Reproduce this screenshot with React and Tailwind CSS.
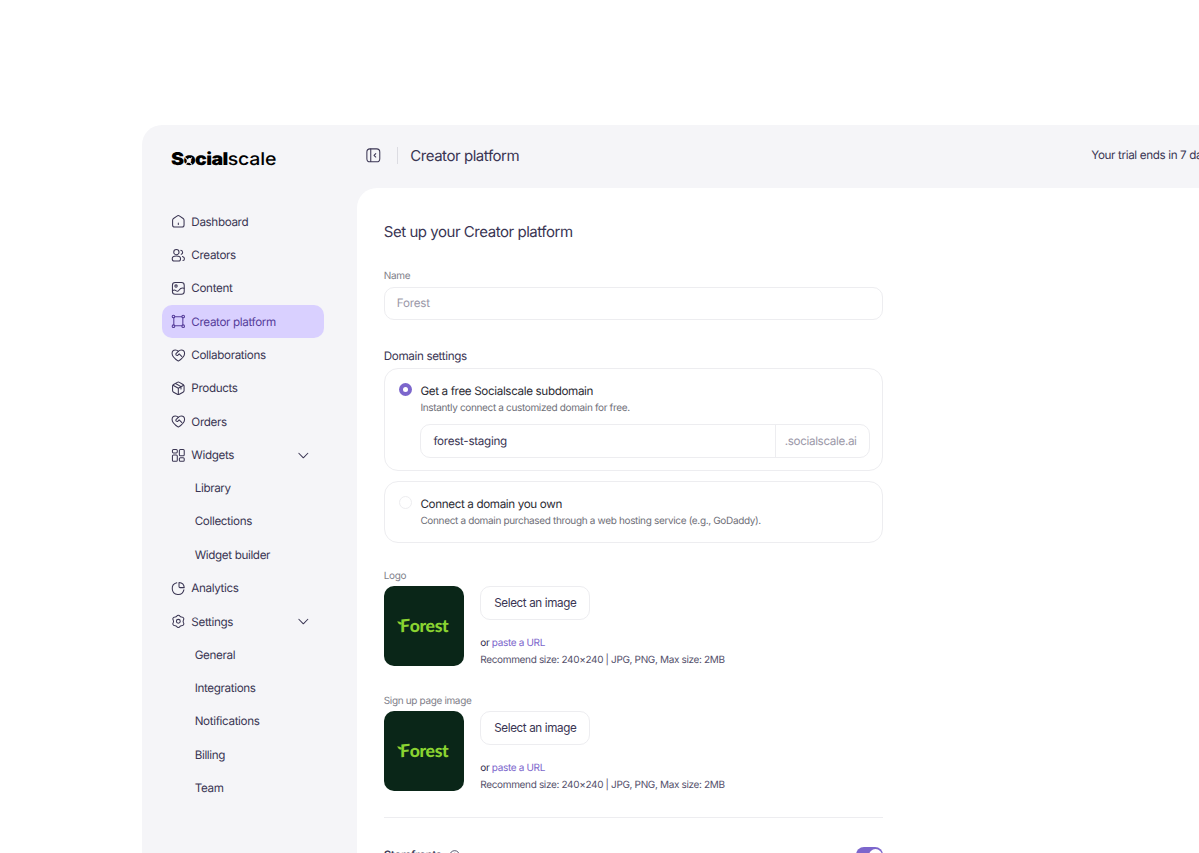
import { clsx } from 'clsx';

const icons = {
  home: <>
      <path d="M3.75 10.4c0-1 .5-1.95 1.3-2.5l5-3.5a3.4 3.4 0 0 1 3.9 0l5 3.5c.8.55 1.3 1.5 1.3 2.5v6.85a3 3 0 0 1-3 3H6.75a3 3 0 0 1-3-3z" />
      <path d="M12 14.5v2.2" />
    </>,
  users: <>
      <circle cx="9.2" cy="7.4" r="3.8" />
      <path d="M3.2 16.8c0-2.4 2.5-3.8 6-3.8s6 1.4 6 3.8c0 2.3-1.5 3.5-3 3.5h-6c-1.5 0-3-1.2-3-3.5z" />
      <path d="M15.6 4.8a3 3 0 0 1 .6 5.8M18 13.8c1.8.5 2.8 1.6 2.8 3.2 0 1.5-.8 2.5-2.1 2.5" />
    </>,
  image: <>
      <rect x="3.5" y="3.5" width="17" height="17" rx="4" />
      <circle cx="8.7" cy="8.7" r="1.7" />
      <path d="M3.7 15.5c1.7-1.5 3.3-1.3 4.8-.2 2 1.5 3.3 1.2 4.7-.8 1.7-2.5 4.1-3.4 7.1-2.5" />
    </>,
  frame: <>
      <circle cx="5" cy="5" r="1.9" />
      <circle cx="19" cy="5" r="1.9" />
      <circle cx="5" cy="19" r="1.9" />
      <circle cx="19" cy="19" r="1.9" />
      <path d="M7 5.5h10M7 18.5h10M5.5 7v10M18.5 7v10" />
    </>,
  heart: <>
      <path d="M12 20.3C7 17 3 13.5 3 9.2 3 6.3 5.2 4.2 7.8 4.2c1.7 0 3.2.8 4.2 2.1 1-1.3 2.5-2.1 4.2-2.1C18.8 4.2 21 6.3 21 9.2c0 4.3-4 7.8-9 11.1z" />
      <path d="m12 6.3-3 3c-.8.8-.7 1.9.1 2.5.8.6 1.7.5 2.4-.2l1.7-1.7 4 3.8" />
    </>,
  box: <>
      <path d="M10.5 3.4a3 3 0 0 1 3 0l5.3 3a3 3 0 0 1 1.5 2.6v6a3 3 0 0 1-1.5 2.6l-5.3 3a3 3 0 0 1-3 0l-5.3-3A3 3 0 0 1 3.7 15V9a3 3 0 0 1 1.5-2.6z" />
      <path d="m4.3 7.5 7.7 4.4 7.7-4.4M12 12v8.8M8 5l7.8 4.5v3.3" />
    </>,
  widgets: <>
      <rect x="3.5" y="3.5" width="7" height="5" rx="1.5" />
      <rect x="3.5" y="11.5" width="7" height="9" rx="1.5" />
      <rect x="13.5" y="3.5" width="7" height="9" rx="1.5" />
      <rect x="13.5" y="15.5" width="7" height="5" rx="1.5" />
    </>,
  pie: <>
      <path d="M9.8 4a8.5 8.5 0 1 0 10.2 10.2" />
      <path d="M13 3.5c4 .3 7.2 3 7.5 7.5h-6c-.9 0-1.5-.6-1.5-1.5z" />
    </>,
  gear: <>
      <path d="M9.7 4.5c.5-.9 1.3-1.3 2.3-1.3s1.8.4 2.3 1.3c.5.8 1.3 1.2 2.2 1.2 2 0 3 .9 3.3 2 .3.9.1 1.7-.4 2.3-.7 1.3-.7 2.7 0 4 .5.6.7 1.4.4 2.3-.3 1.1-1.3 2-3.3 2-.9 0-1.7.4-2.2 1.2-.5.9-1.3 1.3-2.3 1.3s-1.8-.4-2.3-1.3c-.5-.8-1.3-1.2-2.2-1.2-2 0-3-.9-3.3-2-.3-.9-.1-1.7.4-2.3.7-1.3.7-2.7 0-4-.5-.6-.7-1.4-.4-2.3.3-1.1 1.3-2 3.3-2 .9 0 1.7-.4 2.2-1.2z" />
      <circle cx="12" cy="12" r="2.8" />
    </>,
  chevron: <path d="m5.5 9 6.5 6.5L18.5 9" />,
  collapse: <>
      <rect x="2.7" y="2.7" width="18.6" height="18.6" rx="4.5" />
      <path d="M8.3 3v18M15.5 9.5 13 12l2.5 2.5" />
    </>,
  info: <>
      <circle cx="12" cy="12" r="9" />
      <path d="M12 7.5v5M12 15.5v.5" />
    </>
};

const nav = [
  { label: 'Dashboard', icon: 'home' },
  { label: 'Creators', icon: 'users' },
  { label: 'Content', icon: 'image' },
  { label: 'Creator platform', icon: 'frame', active: true },
  { label: 'Collaborations', icon: 'heart' },
  { label: 'Products', icon: 'box' },
  { label: 'Orders', icon: 'heart' },
  { label: 'Widgets', icon: 'widgets', items: ['Library', 'Collections', 'Widget builder'] },
  { label: 'Analytics', icon: 'pie' },
  { label: 'Settings', icon: 'gear', items: ['General', 'Integrations', 'Notifications', 'Billing', 'Team'] }
];

const Icon = ({ name, className = 'size-[16.67px]' }) => (
  <svg className={clsx('shrink-0', className)} viewBox="0 0 24 24" fill="none" stroke="currentColor" strokeWidth={1.5} strokeLinecap="round" strokeLinejoin="round">
    {icons[name]}
  </svg>
);

const Wordmark = () => (
  <div className="flex h-5 origin-left scale-x-111 items-center whitespace-nowrap text-[17.6px] leading-5 text-black">
    <span className="font-black tracking-[-0.03em]">
      S<span className="relative inline-block">o
        <svg className="absolute inset-x-0 bottom-1 h-[10px] w-full" viewBox="0 0 12 10" stroke="#f5f5f8" strokeWidth="1.2" fill="#f5f5f8">
          <path d="M2 1l7 8M9 1 2 9" />
          <circle cx="5.5" cy="5" r="1.5" />
        </svg>
      </span>cial
    </span>
    <span className="font-medium tracking-[-0.01em]">scale</span>
  </div>
);

const NavItem = ({ label, icon, active, items }) => (
  <li>
    <div className={clsx('flex h-[33.33px] items-center gap-[5px] rounded-[10px] pr-[12px] pl-[8.1px]', active ? 'bg-[#d9d0ff] text-[#553c9a]' : 'text-[#3a3553]')}>
      <Icon name={icon} />
      <span className="flex-1 pt-[1.3px]">{label}</span>
      {items && <Icon name="chevron" />}
    </div>
    {items && <ul>
        {items.map(item => <li key={item} className="flex h-[33.33px] items-center pt-px pl-[33.1px] text-[#3a3553]">{item}</li>)}
      </ul>}
  </li>
);

const Option = ({ title, text, checked, children }) => (
  <div className="flex gap-[8.3px] rounded-[14px] border border-[#ededf0] pt-[14px] pr-[12.5px] pb-[12px] pl-[14px]">
    <span className={clsx('flex size-[13.33px] shrink-0 items-center justify-center rounded-full', checked ? 'bg-[#7c66cc]' : 'border border-[#ededf0]')}>
      {checked && <span className="size-[5px] rounded-full bg-white" />}
    </span>
    <div className="flex-1">
      <p className="text-[11.67px] leading-[16.67px] text-[#2b2b33]">{title}</p>
      <p className="pt-[0.8px] text-[10px] leading-[16.4px] tracking-[-0.034em] text-[#6f6f78]">{text}</p>
      {children}
    </div>
  </div>
);

const ImageField = ({ label }) => (
  <div className="pt-[27.8px]">
    <p className="text-[10px] leading-[14px] tracking-[-0.035em] text-[#808089]">{label}</p>
    <div className="mt-[3.2px] flex h-20 gap-[16.5px]">
      <div className="flex size-20 items-center justify-center rounded-[10px] bg-[#0a2618]">
        <span className="relative mr-[2px] pl-[3px] font-[Lato,sans-serif] text-[17.6px] leading-5 font-black tracking-[-0.02em] text-[#8ad331]">
          <svg className="absolute top-[5px] left-0 h-[4px] w-[5px]" viewBox="0 0 6 4" fill="currentColor">
            <path d="M0 .3C2-.1 4.5.6 6 2L5 4C3.5 3.9 1.8 3.2 1.5 1.9z" />
          </svg>
          <span className="inline-block -skew-y-6">F</span>orest
        </span>
      </div>
      <div className="text-[10px] leading-[16.67px] tracking-[-0.034em] text-[#55516b]">
        <button className="block h-[33.33px] w-[110px] rounded-[10px] border border-[#ededf0] pt-px text-[11.67px] tracking-[-0.033em] text-[#3a3553]">Select an image</button>
        <p className="mt-[15.4px]"><span className="text-[#2d2847]">or</span> <a className="text-[#7c66cc]">paste a URL</a></p>
        <p>Recommend size: 240×240 | JPG, PNG, Max size: 2MB</p>
      </div>
    </div>
  </div>
);

export default function App() {
  return <div className="h-screen overflow-hidden bg-white pt-[125px] pl-[141.5px] font-['Inter',sans-serif] text-[11.67px] tracking-[-0.031em] text-[#3a3553] [text-rendering:geometricPrecision]">
      <div className="flex h-full rounded-tl-[20px] bg-[#f5f5f8]">
        <aside className="w-[215.9px] shrink-0 pr-[33.3px] pl-[20.1px]">
          <div className="pt-[24.5px] pb-[35.5px] pl-[9.6px]"><Wordmark /></div>
          <ul>
            {nav.map(item => <NavItem key={item.label} {...item} />)}
          </ul>
        </aside>
        <div className="flex min-w-0 flex-1 flex-col">
          <header className="flex h-[63px] shrink-0 items-center pb-[3px] pl-2">
            <Icon name="collapse" />
            <span className="ml-[14.8px] h-[17px] w-px bg-[#dcdce2]" />
            <h1 className="ml-[12.4px] flex-1 pt-[2px] text-[15px] tracking-[-0.03em]">Creator platform</h1>
            <span className="-mr-[15px] pt-px whitespace-nowrap">Your trial ends in 7 days</span>
          </header>
          <main className="flex-1 rounded-tl-[20px] bg-white pt-[34px] pl-[26.4px]">
            <div className="w-[499.5px]">
              <h2 className="text-[15px] leading-5 tracking-[-0.031em]">Set up your Creator platform</h2>
              <p className="mt-[27px] text-[10px] leading-[14px] tracking-[-0.03em] text-[#808089]">Name</p>
              <div className="mt-[3.6px] flex h-[33.33px] items-center rounded-[10px] border border-[#ededf0] px-3 pt-px tracking-[-0.02em] text-[#9b98a8]">Forest</div>
              <p className="mt-[28px] leading-4">Domain settings</p>
              <div className="mt-[3.7px] flex flex-col gap-[10px]">
                <Option title="Get a free Socialscale subdomain" text="Instantly connect a customized domain for free." checked>
                  <div className="mt-[8px] flex h-[33.33px] items-stretch rounded-[10px] border border-[#ededf0]">
                    <span className="flex flex-1 items-center pt-[1.5px] pl-3 tracking-[-0.025em]">forest-staging</span>
                    <span className="flex w-[94px] items-center border-l border-[#ededf0] pt-[1.5px] pl-[9px] text-[#9b98a8]">.socialscale.ai</span>
                  </div>
                </Option>
                <Option title="Connect a domain you own" text="Connect a domain purchased through a web hosting service (e.g., GoDaddy)." />
              </div>
              <div className="-mt-[1.3px]">
                <ImageField label="Logo" />
                <ImageField label="Sign up page image" />
              </div>
              <div className="mt-[26px] h-px bg-[#ededf0]" />
              <div className="mt-[29px] flex h-4 items-center">
                <span className="font-semibold tracking-[-0.045em]">Storefronts</span>
                <Icon name="info" className="ml-1.5 size-[13.33px]" />
                <span className="ml-auto flex h-4 w-[27px] items-center justify-end rounded-full bg-[#7c66cc] px-[1.5px]">
                  <span className="size-[13px] rounded-full bg-white" />
                </span>
              </div>
            </div>
          </main>
        </div>
      </div>
    </div>;
}
